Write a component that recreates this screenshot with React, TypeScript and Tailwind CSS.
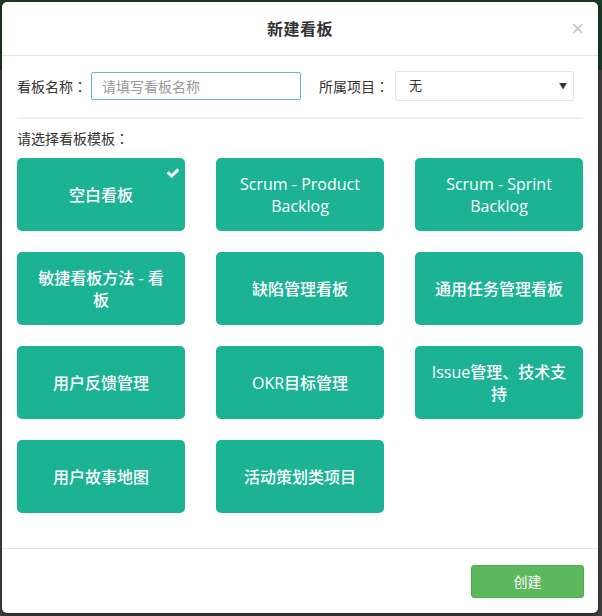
const templates = [
  "空白看板",
  "Scrum - Product Backlog",
  "Scrum - Sprint Backlog",
  "敏捷看板方法 - 看板",
  "缺陷管理看板",
  "通用任务管理看板",
  "用户反馈管理",
  "OKR目标管理",
  "Issue管理、技术支持",
  "用户故事地图",
  "活动策划类项目",
];

const font = "font-['Open_Sans','Noto_Sans_CJK_SC',sans-serif]";

// full-width colon, centred like the reference
function Colon() {
  return <span className="font-['Noto_Sans_CJK_JP',sans-serif]">：</span>;
}

function CheckIcon() {
  return (
    <svg
      viewBox="0 0 1792 1792"
      className="absolute right-[5px] top-[8px] w-[14px] h-[14px]"
      fill="currentColor"
    >
      <path d="M1671 566q0 40-28 68l-724 724-136 136q-28 28-68 28t-68-28l-136-136-362-362q-28-28-28-68t28-68l136-136q28-28 68-28t68 28l294 295 656-657q28-28 68-28t68 28l136 136q28 28 28 68z" />
    </svg>
  );
}

export default function App() {
  return (
    <div
      className={`w-[602px] h-[616px] p-[2px] pr-[4px] pb-[3px] bg-[linear-gradient(#1d3d22_0,#1d3d22_70px,#444_70px)] ${font}`}
    >
      <div className="w-[596px] h-[611px] bg-white rounded-[5px] shadow-[0_3px_9px_rgba(0,0,0,0.5)] flex flex-col">
        <div className="relative h-[54px] border-b border-[#e5e5e5] flex items-center justify-center shrink-0">
          <span className="text-[16px] font-bold text-[#333] tracking-[0.5px]">新建看板</span>
          <span className="absolute right-[14px] top-[14px] text-[22px] leading-[26px] text-[#c8c8c8] font-['Liberation_Sans',sans-serif]">
            ×
          </span>
        </div>

        <div className="flex-1 px-[15px] pt-[15px]">
          <div className="flex items-center text-[14px] text-[#333]">
            <span className="w-[74px]">
              看板名称<Colon />
            </span>
            <div className="w-[210px] h-[28px] border border-[#66afe9] rounded-[2px] flex items-center pl-[10px] text-[#999]">
              请填写看板名称
            </div>
            <span className="ml-[18px] w-[76px]">
              所属项目<Colon />
            </span>
            <div className="w-[179px] h-[30px] border border-[#e5e6e7] rounded-[2px] flex items-center justify-between pl-[13px] pr-[6px]">
              <span className="text-[13px]">无</span>
              <span className="text-[8px] text-[#333]">▼</span>
            </div>
          </div>

          <div className="mt-[16px] h-[2px] bg-[#eeeeee]" />

          <div className="mt-[9px] text-[14px] text-[#333] leading-[20px]">
            请选择看板模板<Colon />
          </div>

          <div className="mt-[9px] grid grid-cols-3 gap-x-[31px] gap-y-[21px]">
            {templates.map((t, i) => (
              <div
                key={t}
                className="relative h-[73px] rounded-[5px] bg-[#1bb394] text-white text-[16px] font-medium leading-[22px] flex items-center justify-center text-center px-[16px]"
              >
                {t}
                {i === 0 && <CheckIcon />}
              </div>
            ))}
          </div>
        </div>

        <div className="h-[65px] border-t border-[#e5e5e5] flex items-center justify-end px-[14px] shrink-0">
          <button
            type="button"
            className="w-[113px] h-[33px] rounded-[3px] bg-[#5cb85c] border border-[#4cae4c] text-white text-[14px]"
          >
            创建
          </button>
        </div>
      </div>
    </div>
  );
}
